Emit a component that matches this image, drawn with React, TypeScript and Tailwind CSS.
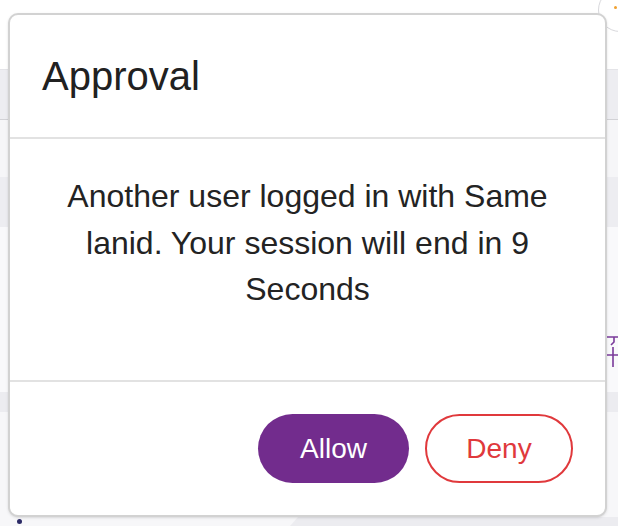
import type React from "react"

const font = { fontFamily: '"Liberation Sans", Arial, Helvetica, sans-serif' }

const BackgroundPage: React.FC = () => {
  return (
    <div className="flex h-[526px] w-[618px] flex-col bg-white">
      <div className="flex h-[70px] justify-end border-b border-[#e4e4e8] bg-white">
        <div className="-mr-[24px] -mt-[12px] flex h-[44px] w-[44px] items-center justify-center rounded-full border border-[#d8d8dc] bg-white">
          <span className="-ml-[10px] -mt-[6px] h-[3px] w-[3px] rounded-full bg-[#f0a030]" />
        </div>
      </div>
      <div className="h-[50px] border-b border-[#d2d2d6] bg-[#ededf1]" />
      <div className="h-[57px] bg-[#f6f6f8]" />
      <div className="h-[50px] bg-[#ededf1]" />
      <div className="flex h-[165px] justify-end bg-[#f9f9fb] pt-[108px]">
        <svg width="14" height="34" viewBox="0 0 14 34" fill="none" stroke="#7a3a9a" strokeWidth="1.6">
          <path d="M2 2h12M10 2v5l-3 3M2 20h12M9 12v20" />
        </svg>
      </div>
      <div className="h-[20px] bg-[#ececf0]" />
      <div className="flex flex-1 items-end bg-[#f7f7f9]">
        <div className="flex h-[9px] w-full items-center">
          <span className="ml-[17px] h-[5px] w-[5px] rounded-full bg-[#2b2a66]" />
          <div className="ml-[268px] h-[9px] flex-1 bg-[#ececf0] [clip-path:polygon(8px_0,100%_0,100%_100%,0_100%)]" />
        </div>
      </div>
    </div>
  )
}

const ApprovalModal: React.FC = () => {
  return (
    <div
      className="absolute left-[8px] top-[13px] flex h-[504px] w-[599px] flex-col overflow-hidden rounded-[10px] border-2 border-[#d2d2d2] bg-white shadow-sm"
      style={font}
    >
      <div className="flex h-[124px] items-center border-b-2 border-[#e2e2e2] px-[32px]">
        <h2 className="text-[40px] leading-[48px] text-[#212121]">Approval</h2>
      </div>
      <div className="h-[243px] border-b-2 border-[#e2e2e2] px-[32px] pt-[34px]">
        <p className="text-center text-[32px] leading-[46.5px] text-[#232323]">
          Another user logged in with Same lanid. Your session will end in 9 Seconds
        </p>
      </div>
      <div className="flex flex-1 items-center justify-end gap-[16px] px-[32px]">
        <button className="flex h-[69px] w-[151px] items-center justify-center rounded-full bg-[#722c8d] text-[28px] text-white">
          Allow
        </button>
        <button className="flex h-[69px] w-[148px] items-center justify-center rounded-full border-2 border-[#e0393c] bg-white text-[28px] text-[#e0393c]">
          Deny
        </button>
      </div>
    </div>
  )
}

export default function App() {
  return (
    <div className="relative h-[526px] w-[618px] overflow-hidden">
      <BackgroundPage />
      <ApprovalModal />
    </div>
  )
}
